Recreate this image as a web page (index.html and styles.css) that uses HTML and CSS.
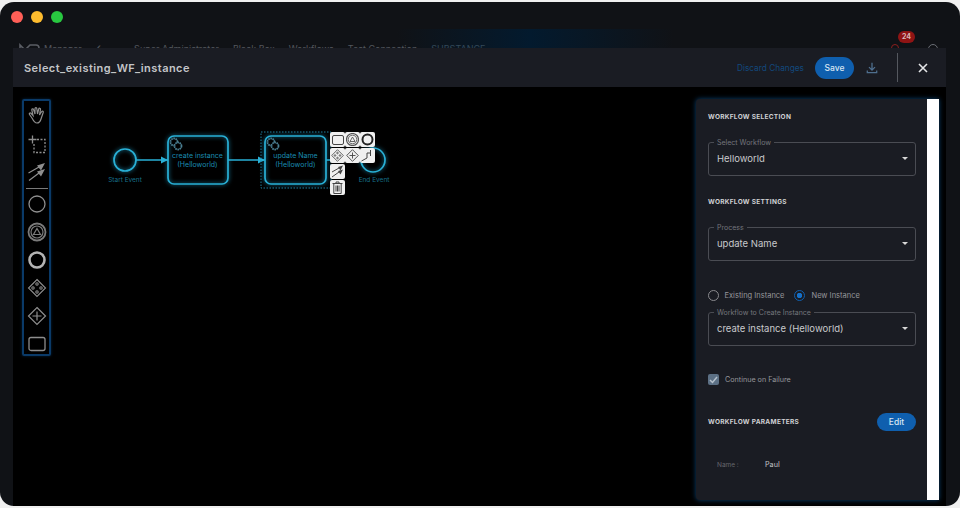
FILE: index.html
```html
<!DOCTYPE html>
<html lang="en">

<head>
    <meta charset="UTF-8">
    <meta name="viewport" content="width=device-width, initial-scale=1.0">
    <title>Select_existing_WF_instance</title>
    <link rel="stylesheet" href="styles.css">
</head>

<body>
    <div class="window">
        <div class="titlebar">
            <span class="dot red"></span>
            <span class="dot yellow"></span>
            <span class="dot green"></span>
        </div>

        <div class="app-nav">
            <svg class="app-logo" width="22" height="12" viewBox="0 0 22 12">
                <path d="M1 11V2l5 5 5-5h6a3 3 0 0 1 0 6h-5" fill="none" stroke="#5a5d64" stroke-width="1.6" />
            </svg>
            <span class="app-name">Manager</span>
            <span class="app-back">&#8249;</span>
            <span class="app-crumb first">Super Administrator</span>
            <span class="app-crumb">Black Box</span>
            <span class="app-crumb">Workflows</span>
            <span class="app-crumb">Test Connection</span>
            <span class="app-crumb accent">SUBSTANCE</span>
            <div class="app-right">
                <span class="bell"></span>
                <span class="badge">24</span>
                <span class="avatar"></span>
            </div>
        </div>

        <div class="modal">
            <header class="modal-head">
                <h1>Select_existing_WF_instance</h1>
                <div class="head-actions">
                    <a class="discard">Discard Changes</a>
                    <button class="btn save">Save</button>
                    <svg class="download" width="12" height="12" viewBox="0 0 14 14" fill="none" stroke="#4f6f8f" stroke-width="1.5">
                        <path d="M7 1v8M3.500 6 7 9.500 10.500 6M1.500 10v2.500h11V10" />
                    </svg>
                    <span class="divider"></span>
                    <svg class="close" width="10" height="10" viewBox="0 0 10 10" stroke="#e4e5e7" stroke-width="1.6">
                        <path d="M1 1l8 8M9 1l-8 8" />
                    </svg>
                </div>
            </header>

            <div class="modal-body">
                <div class="palette">
                    <svg width="20" height="20" viewBox="0 0 20 20" fill="none" stroke="#8e8e8e" stroke-width="1.2">
                        <path d="M5 12 2.500 8.500c-.8-1 .5-2 1.400-1.200L6 9.500 4.800 4c-.2-1.300 1.500-1.600 1.800-.3L8 8V2.500c0-1.300 1.800-1.300 1.800 0L10.500 8l1.200-5c.3-1.200 2-.9 1.800.3L12.500 9l2.200-3.500c.7-1 2.100-.2 1.500 1L14 13c-.6 2-1.500 4-4 4s-3.500-2-5-5Z" />
                    </svg>
                    <svg width="20" height="20" viewBox="0 0 20 20" fill="none" stroke="#8e8e8e" stroke-width="1.3">
                        <path d="M5.500 1.500v8M1.500 5.500h8" />
                        <path d="M10 5.500h8v13H7V10" stroke-dasharray="2 1.500" />
                    </svg>
                    <svg width="20" height="20" viewBox="0 0 20 20" fill="none" stroke="#8e8e8e" stroke-width="1.2">
                        <path d="M1.500 11 12 5M2 18.500 12 11" />
                        <path d="M10 3.500 18 1l-4 7.500ZM10 9.500l8-2.500-4 7.500Z" fill="#8e8e8e" stroke="none" />
                    </svg>
                    <span class="palette-line"></span>
                    <svg width="20" height="20" viewBox="0 0 20 20" fill="none" stroke="#8e8e8e" stroke-width="1.3">
                        <circle cx="10" cy="10" r="8" />
                    </svg>
                    <svg width="20" height="20" viewBox="0 0 20 20" fill="none" stroke="#7a7a7a" stroke-width="1.2">
                        <circle cx="10" cy="10" r="8.500" stroke-width="1.8" />
                        <circle cx="10" cy="10" r="6" />
                        <path d="M10 6.500 13.500 12.500H6.500Z" />
                    </svg>
                    <svg width="20" height="20" viewBox="0 0 20 20" fill="none" stroke="#b4b4b4" stroke-width="2.6">
                        <circle cx="10" cy="10" r="7.500" />
                    </svg>
                    <svg width="20" height="20" viewBox="0 0 20 20" fill="none" stroke="#8e8e8e" stroke-width="1.1">
                        <path d="M10 1.500 18.500 10 10 18.500 1.500 10Z" />
                        <circle cx="10" cy="6" r="1.200" />
                        <circle cx="10" cy="14" r="1.200" />
                        <circle cx="6" cy="10" r="1.200" />
                        <circle cx="14" cy="10" r="1.200" />
                    </svg>
                    <svg width="20" height="20" viewBox="0 0 20 20" fill="none" stroke="#8e8e8e" stroke-width="1.2">
                        <path d="M10 1.500 18.500 10 10 18.500 1.500 10Z" />
                        <path d="M10 5.500v9M5.500 10h9" />
                    </svg>
                    <svg width="18" height="20" viewBox="0 0 18 20" fill="none" stroke="#8e8e8e" stroke-width="1.3">
                        <rect x="1" y="3.500" width="16" height="13" rx="2" />
                    </svg>
                </div>

                <!-- bpmn diagram -->
                <div class="diagram">
                    <svg class="diagram-svg" width="300" height="80" viewBox="0 0 300 80">
                        <g class="flow">
                            <circle class="glow" cx="45" cy="36" r="11" />
                            <rect class="glow" x="88" y="12" width="60" height="48" rx="6" />
                            <rect class="glow" x="185" y="12" width="61" height="48" rx="6" />
                            <circle class="glow" cx="293" cy="36" r="12" />
                            <path d="M56 36H88M148 36h37M246 36h35" />
                            <path class="arrow" d="M81 32.500 88 36l-7 3.500ZM178 32.500l7 3.500-7 3.500Z" />
                        </g>
                        <rect class="selection" x="181" y="8" width="70" height="56" />
                        <g class="gear">
                            <circle cx="94" cy="18" r="3.500" />
                            <circle cx="98" cy="22" r="3.500" />
                            <circle cx="191" cy="18" r="3.500" />
                            <circle cx="195" cy="22" r="3.500" />
                        </g>
                        <text class="node-text" x="117.500" y="34">create instance</text>
                        <text class="node-text" x="117.500" y="43">(Helloworld)</text>
                        <text class="node-text" x="215.500" y="34">update Name</text>
                        <text class="node-text" x="215.500" y="43">(Helloworld)</text>
                        <text class="event-text" x="45" y="57.500">Start Event</text>
                        <text class="event-text" x="294" y="57.500">End Event</text>
                    </svg>

                    <div class="context-pad">
                        <span class="pad-item">
                            <svg width="12" height="10" viewBox="0 0 12 10" fill="none" stroke="#444" stroke-width="1">
                                <rect x=".5" y=".5" width="11" height="9" rx="1.5" />
                            </svg>
                        </span>
                        <span class="pad-item">
                            <svg width="13" height="13" viewBox="0 0 13 13" fill="none" stroke="#555" stroke-width=".9">
                                <circle cx="6.500" cy="6.500" r="6" stroke-width="1.2" />
                                <circle cx="6.500" cy="6.500" r="4.300" />
                                <path d="M6.500 4 9 8.500H4Z" />
                            </svg>
                        </span>
                        <span class="pad-item">
                            <svg width="13" height="13" viewBox="0 0 13 13" fill="none" stroke="#222" stroke-width="2">
                                <circle cx="6.500" cy="6.500" r="5" />
                            </svg>
                        </span>
                        <span class="pad-item">
                            <svg width="13" height="13" viewBox="0 0 13 13" fill="none" stroke="#444" stroke-width=".8">
                                <path d="M6.500.7 12.300 6.500 6.500 12.300.7 6.500Z" />
                                <circle cx="6.500" cy="4" r=".8" />
                                <circle cx="6.500" cy="9" r=".8" />
                                <circle cx="4" cy="6.500" r=".8" />
                                <circle cx="9" cy="6.500" r=".8" />
                            </svg>
                        </span>
                        <span class="pad-item">
                            <svg width="13" height="13" viewBox="0 0 13 13" fill="none" stroke="#444" stroke-width=".9">
                                <path d="M6.500.7 12.300 6.500 6.500 12.300.7 6.500ZM6.500 3.500v6M3.500 6.500h6" />
                            </svg>
                        </span>
                        <span class="pad-item">
                            <svg width="13" height="13" viewBox="0 0 13 13" fill="none" stroke="#444" stroke-width="1">
                                <path d="M.5 12 6 9V4h3M9.500 1v6" />
                            </svg>
                        </span>
                        <span class="pad-item">
                            <svg width="13" height="13" viewBox="0 0 13 13" fill="none" stroke="#444" stroke-width="1">
                                <path d="M1 7 8 3M1 12l7-5" />
                                <path d="M7 2l5-1.500-2.500 5ZM7 6l5-1.500-2.500 5Z" fill="#444" stroke="none" />
                            </svg>
                        </span>
                        <span class="pad-break"></span>
                        <span class="pad-item">
                            <svg width="11" height="13" viewBox="0 0 11 13" fill="none" stroke="#444" stroke-width="1">
                                <path d="M.5 2.500h10M4 2.500V1h3v1.500M1.800 2.500V12.500h7.400V2.500M4 4.500v6M5.500 4.500v6M7 4.500v6" />
                            </svg>
                        </span>
                    </div>
                </div>

                <aside class="panel">
                    <div class="panel-main">
                        <h3 class="panel-title first">Workflow Selection</h3>
                        <div class="field">
                            <span class="field-label">Select Workflow</span>
                            <span class="field-value">Helloworld</span>
                            <span class="caret"></span>
                        </div>

                        <h3 class="panel-title second">Workflow Settings</h3>
                        <div class="field">
                            <span class="field-label">Process</span>
                            <span class="field-value">update Name</span>
                            <span class="caret"></span>
                        </div>

                        <div class="radios">
                            <label class="radio"><span class="radio-mark"></span>Existing Instance</label>
                            <label class="radio"><span class="radio-mark on"></span>New Instance</label>
                        </div>
                        <div class="field">
                            <span class="field-label">Workflow to Create Instance</span>
                            <span class="field-value">create instance (Helloworld)</span>
                            <span class="caret"></span>
                        </div>

                        <label class="check">
                            <span class="check-mark">
                                <svg width="9" height="8" viewBox="0 0 9 8" fill="none" stroke="#b5c0cb" stroke-width="1.5">
                                    <path d="M1 4l2.500 2.500L8 1" />
                                </svg>
                            </span>
                            Continue on Failure
                        </label>

                        <div class="params-head">
                            <h3 class="panel-title">Workflow Parameters</h3>
                            <button class="btn edit">Edit</button>
                        </div>
                        <div class="param">
                            <span class="param-name">Name :</span>
                            <span class="param-value">Paul</span>
                        </div>
                    </div>
                    <div class="scrollbar"></div>
                </aside>
            </div>
        </div>
    </div>
</body>

</html>
```

FILE: styles.css
```css
* {
    box-sizing: border-box;
}

html,
body {
    margin: 0;
    height: 100%;
    overflow: hidden;
}

body {
    background: #f0f0f0;
    padding-top: 2px;
    padding-bottom: 2px;
    font-family: 'Inter', 'Roboto', sans-serif;
}

.window {
    display: flex;
    flex-direction: column;
    height: 504px;
    background: #101216;
    border-radius: 14px;
    overflow: hidden;
}

.titlebar {
    display: flex;
    gap: 8px;
    padding: 9px 11px 0;
    height: 27px;
}

.dot {
    width: 12px;
    height: 12px;
    border-radius: 50%;
}

.red {
    background: #ff5f57;
}

.yellow {
    background: #febc2e;
}

.green {
    background: #28c840;
}

/* app behind the modal, only its bottom edge shows */
.app-nav {
    display: flex;
    align-items: flex-start;
    gap: 14px;
    height: 19px;
    padding: 14px 22px 0 19px;
    overflow: hidden;
    font-size: 9px;
    color: #53565d;
    background: linear-gradient(to right, #101216 397px, #031a2e 530px, #101216 673px);
}

.app-logo {
    flex: none;
}

.app-name {
    margin-left: -11px;
}

.app-back {
    font-size: 14px;
    line-height: 10px;
}

.app-crumb.first {
    margin-left: 19px;
}

.app-crumb.accent {
    color: #334859;
}

.app-right {
    position: relative;
    margin-left: auto;
    width: 50px;
    height: 19px;
}

.bell {
    position: absolute;
    left: 3px;
    top: 1px;
    width: 8px;
    height: 8px;
    border: 1px solid #8c1f1f;
    border-radius: 50% 50% 0 0;
}

.badge {
    position: absolute;
    left: 10px;
    top: -12px;
    width: 17px;
    height: 12px;
    border-radius: 6px;
    background: #8f1414;
    color: #d9b9b9;
    font-size: 7px;
    font-weight: 700;
    line-height: 12px;
    text-align: center;
}

.avatar {
    position: absolute;
    right: 0;
    top: 1px;
    width: 10px;
    height: 10px;
    border: 1px solid #6b6e75;
    border-radius: 50%;
}

.modal {
    flex: 1;
    display: flex;
    flex-direction: column;
    min-height: 0;
    margin: 0 14px 0 13px;
    background: #000;
}

.modal-head {
    display: flex;
    align-items: center;
    justify-content: space-between;
    flex: none;
    height: 39px;
    padding: 0 18px 0 11px;
    background: #1a1c23;
}

.modal-head h1 {
    margin: 0;
    font-size: 11px;
    font-weight: 600;
    letter-spacing: .45px;
    color: #c4c5c8;
}

.head-actions {
    display: flex;
    align-items: center;
}

.discard {
    font-size: 8.3px;
    color: #12487c;
}

.btn {
    border: 0;
    border-radius: 11px;
    background: #0f5fae;
    color: #d8e6f3;
    font-family: inherit;
    font-size: 8.5px;
    font-weight: 500;
    padding: 0;
}

.save {
    width: 39px;
    height: 22px;
    margin-left: 11px;
}

.download {
    margin-left: 12px;
}

.divider {
    width: 1px;
    height: 29px;
    margin-left: 19px;
    background: #55585f;
}

.close {
    margin-left: 20px;
}

.modal-body {
    flex: 1;
    display: flex;
    align-items: flex-start;
    min-height: 0;
    padding: 12px 7px 0 9px;
}

.palette {
    display: flex;
    flex: none;
    flex-direction: column;
    align-items: center;
    gap: 8px;
    width: 29px;
    height: 257px;
    padding-top: 5px;
    border: 2px solid #0a3a68;
    border-radius: 2px;
    box-shadow: 0 0 3px #06243f;
}

.palette svg {
    flex: none;
}

.palette-line {
    flex: none;
    width: 22px;
    height: 1px;
    margin: -2.5px 0;
    background: #7a7a7a;
}

.diagram {
    position: relative;
    flex: 1;
    align-self: stretch;
}

.diagram-svg {
    position: absolute;
    left: 29px;
    top: 25px;
    overflow: visible;
}

.flow {
    fill: none;
    stroke: #29b0d6;
    stroke-width: 1.3;
}

.flow .glow {
    stroke-width: 1.7;
    filter: drop-shadow(0 0 2px #1a8fb5);
}

.flow .arrow {
    fill: #29b0d6;
    stroke: none;
}

.selection {
    fill: none;
    stroke: #1f7f9f;
    stroke-width: 1;
    stroke-dasharray: 1.5 1.5;
}

.gear {
    fill: #000;
    stroke: #4a7f92;
    stroke-width: 1.8;
    stroke-dasharray: 1.6 .6;
}

.node-text {
    font-size: 7px;
    fill: #1a8cb0;
    text-anchor: middle;
}

.event-text {
    font-size: 6.5px;
    fill: #17708c;
    text-anchor: middle;
}

.context-pad {
    position: absolute;
    left: 279px;
    top: 33px;
    display: grid;
    grid-template-columns: repeat(3, 15px);
    grid-auto-rows: 15px;
    gap: 1px 0;
}

.pad-item {
    display: flex;
    align-items: center;
    justify-content: center;
    width: 15px;
    height: 15px;
    background: #f0f0f0;
    border-radius: 2px;
}

.pad-break {
    grid-column: 2 / 4;
}

.panel {
    display: flex;
    flex: none;
    width: 243px;
    height: 401px;
    background: #1a1c23;
    border-radius: 4px 0 0 4px;
    box-shadow: 0 0 5px #0a4273;
}

.panel-main {
    flex: 1;
    min-width: 0;
    padding: 0 11px 0 12px;
}

.scrollbar {
    flex: none;
    width: 12px;
    background: #fff;
}

.panel-title {
    margin: 0;
    font-size: 6.5px;
    font-weight: 700;
    letter-spacing: .3px;
    line-height: 10px;
    text-transform: uppercase;
    color: #d0d1d4;
}

.panel-title.first {
    padding-top: 13px;
    margin-bottom: 20px;
}

.panel-title.second {
    padding-top: 21px;
    margin-bottom: 20px;
}

.field {
    position: relative;
    display: flex;
    align-items: center;
    height: 34px;
    padding: 0 8px 1px;
    border: 1px solid #4a4c53;
    border-radius: 3px;
}

.field-label {
    position: absolute;
    left: 5px;
    top: -5px;
    padding: 0 3px;
    background: #1a1c23;
    font-size: 7px;
    line-height: 9px;
    color: #74767c;
}

.field-value {
    font-size: 9.5px;
    color: #c8c9cc;
}

.caret {
    position: absolute;
    right: 7px;
    top: 14px;
    border-left: 3px solid transparent;
    border-right: 3px solid transparent;
    border-top: 3px solid #d8d8d8;
}

.radios {
    display: flex;
    align-items: center;
    gap: 10px;
    height: 14px;
    margin: 27px 0 10px -.5px;
}

.radio {
    display: flex;
    align-items: center;
    gap: 6px;
    font-size: 7.5px;
    color: #96979b;
}

.radio-mark {
    flex: none;
    width: 11px;
    height: 11px;
    border: 1px solid #8a8a8e;
    border-radius: 50%;
}

.radio-mark.on {
    border-color: #0f5fae;
    background: radial-gradient(circle, #1670c8 2.5px, transparent 3px);
}

.check {
    display: flex;
    align-items: center;
    gap: 6px;
    margin-top: 28px;
    font-size: 7.2px;
    line-height: 11px;
    color: #96979b;
}

.check-mark {
    display: flex;
    align-items: center;
    justify-content: center;
    width: 11px;
    height: 11px;
    background: #5c7085;
    border-radius: 2px;
}

.params-head {
    display: flex;
    align-items: center;
    justify-content: space-between;
    margin-top: 28px;
}

.edit {
    width: 39px;
    height: 18px;
    border-radius: 9px;
}

.param {
    display: flex;
    align-items: center;
    margin-top: 30px;
    padding-left: 9px;
    font-size: 6.5px;
    line-height: 8px;
}

.param-name {
    width: 48px;
    color: #65676d;
}

.param-value {
    font-size: 7.2px;
    color: #c4c5c8;
}
```
